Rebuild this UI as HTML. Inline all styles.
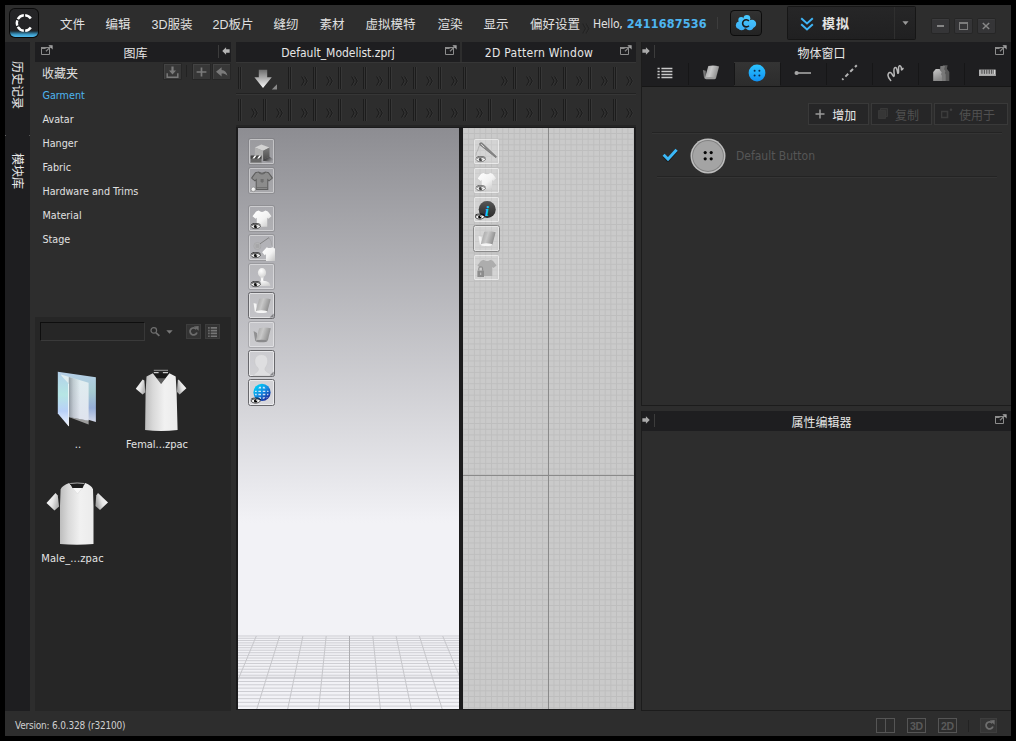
<!DOCTYPE html>
<html lang="zh">
<head>
<meta charset="utf-8">
<title>CLO</title>
<style>
*{box-sizing:border-box;margin:0;padding:0}
html,body{width:1016px;height:741px;overflow:hidden;background:#000}
body{font-family:"DejaVu Sans Condensed","Liberation Sans","Noto Sans CJK SC",sans-serif;color:#dcdcdc;position:relative}
.abs,.abs>*{position:absolute}
#win{position:absolute;left:5px;top:5px;width:1006px;height:731px;background:#2d2d2d;overflow:hidden}
#win *{position:absolute}
.tbar{background:#1e1e20;height:20px}
.tt{font-size:12px;line-height:21.600px;white-space:nowrap;color:#e6e6e6;top:0}
.cj{font-family:"Liberation Sans","Noto Sans CJK SC",sans-serif;transform:translateY(1px)}
.menu{top:10.500px;font-size:12.500px;line-height:16px;white-space:nowrap;color:#e0e0e0;font-family:"Liberation Sans","Noto Sans CJK SC",sans-serif;transform:translateY(1px)}
.li{left:37.500px;font-size:10.700px;line-height:14px;margin-top:1px;color:#e0e0e0;white-space:nowrap}
.sbtn{background:#373737;border:0 solid #282828;width:17px;height:15.600px;box-shadow:0 0 0 0.800px #262626,inset 1px 1px 0 #434343}
.wbtn{top:13.700px;width:17px;height:14.600px;background:#353537;border-radius:1px;box-shadow:0 0 0 0.800px #252525,inset 0 1px 0 #3c3c3e}
.vt{width:60px;height:18px;line-height:18px;font-size:12px;text-align:center;white-space:nowrap;transform:rotate(90deg);color:#e8e8e8}
.cap{font-size:11px;line-height:14px;text-align:center;white-space:nowrap;color:#e4e4e4}
.hd{width:4px;height:22px;background:linear-gradient(90deg,#1c1c1c 0 1px,#323232 1px 2px,#1c1c1c 2px 3px,#363636 3px 4px)}
.cv{width:8.200px;height:10px;margin:0.500px 0 0 1.100px}
.ib{width:27px;height:27px;border:1px solid rgba(50,50,56,0.22);border-radius:2.500px;background:rgba(255,255,255,0.10);box-shadow:inset 0 0 0 1px rgba(255,255,255,0.40)}
.ib svg{left:-0.500px;top:-0.500px;width:26px;height:26px}
.ib.dk{border-color:#68686c;box-shadow:inset 0 0 0 1px rgba(255,255,255,0.5)}
.ib.lt{border-color:rgba(0,0,0,0.07);background:rgba(255,255,255,0.2);box-shadow:inset 0 0 0 1px rgba(255,255,255,0.5)}
.ib.ldk{border-color:#8a8a8a;background:rgba(255,255,255,0.2);box-shadow:inset 0 0 0 1px rgba(255,255,255,0.45)}
.obtn{top:98px;height:22px;background:#262627;border:1px solid #393939}
.obtn span{font-size:12px;line-height:18px;margin-top:0.500px;white-space:nowrap}
.stb{top:713px;width:19px;height:15px;border:1.500px solid #555;font-family:"Liberation Sans",sans-serif;font-weight:bold;font-size:10.500px;line-height:14px;text-align:center;color:#5a5a5a;letter-spacing:-0.200px}
.panel{background:#262626}
</style>
</head>
<body>
<div id="win">
<svg width="0" height="0" style="position:absolute">
<defs>
<symbol id="pop" viewBox="0 0 12 10">
<path d="M0.5 2.5h8v7h-8z" fill="none" stroke="#8c8c8c" stroke-width="1"/>
<path d="M0 2h6.2v2H0z" fill="#8c8c8c"/>
<path d="M5 6.2L10.2 1" stroke="#8c8c8c" stroke-width="1.3" fill="none"/>
<path d="M7.4 0.3h4.2v4.2z" fill="#a8a8a8"/>
<path d="M4.6 3.2L8 3.2 8 4.9 6 6.8 4.6 5.5z" fill="#1e1e20"/>
<path d="M5.2 6.2L10.2 1.2" stroke="#8c8c8c" stroke-width="1.2" fill="none"/>
</symbol>
<symbol id="chev" viewBox="0 0 9 11">
<path d="M1.5 0.5L4.3 5.5 1.5 10.5M4.9 0.5L7.7 5.5 4.9 10.5" fill="none" stroke="#3a3a3a" stroke-width="1"/>
<path d="M0.7 0.5L3.5 5.5 0.7 10.5M4.1 0.5L6.9 5.5 4.1 10.5" fill="none" stroke="#1a1a1a" stroke-width="1.1"/>
</symbol>

<symbol id="eye" viewBox="0 0 11 7">
<path d="M0.400 3.800C2.400 0.800 8.400 0.600 10.600 3.600 8.400 6.800 2.600 6.800 0.400 3.800z" fill="#f6f6f6" stroke="currentColor" stroke-width="0.700"/>
<path d="M0.200 2.500C2.600 -0.500 8.600 -0.500 10.900 2.500" fill="none" stroke="currentColor" stroke-width="0.800"/>
<circle cx="5.400" cy="3.700" r="1.800" fill="currentColor"/><circle cx="6.200" cy="3" r="0.600" fill="#f6f6f6"/>
</symbol>
<symbol id="tee" viewBox="0 0 22 19">
<path d="M7.2 0.4Q11 3.4 14.8 0.4L17.6 1.4 21.7 6.8 18.2 9.6 16.9 8.4V18.6H5.1V8.4L3.8 9.6 0.3 6.8 4.4 1.4z"/>
</symbol>
<symbol id="roll" viewBox="0 0 20 16">
<path d="M1 5.2L4.2 6V13.8L2.4 14.6z" fill="#f4f4f4"/>
<path d="M7 0.8Q13 -0.4 19 1.2L15.6 14.2Q9 16.2 3.2 14.4z" fill="url(#groll)"/>
<ellipse cx="9.3" cy="14.3" rx="6.2" ry="1.5" fill="#f6f6f6"/>
</symbol>
<linearGradient id="groll" x1="0" y1="0" x2="1" y2="0.3"><stop offset="0" stop-color="#9a9a9a"/><stop offset="0.5" stop-color="#c8c8c8"/><stop offset="1" stop-color="#8c8c8c"/></linearGradient>
<linearGradient id="gtee" x1="0" y1="0" x2="1" y2="1"><stop offset="0" stop-color="#ffffff"/><stop offset="0.55" stop-color="#f2f2f2"/><stop offset="1" stop-color="#c4c4c4"/></linearGradient>
<linearGradient id="gglobe" x1="0.15" y1="0.1" x2="0.85" y2="0.95"><stop offset="0" stop-color="#00d0f8"/><stop offset="0.5" stop-color="#1488e0"/><stop offset="1" stop-color="#1a1a90"/></linearGradient>
<linearGradient id="gshadow" x1="0" y1="0" x2="1" y2="0.500"><stop offset="0" stop-color="#161616"/><stop offset="0.500" stop-color="#333" stop-opacity="0.700"/><stop offset="1" stop-color="#444" stop-opacity="0"/></linearGradient>
<linearGradient id="gcr" x1="0" y1="0" x2="0" y2="1"><stop offset="0" stop-color="#7a7a7a"/><stop offset="1" stop-color="#4e4e4e"/></linearGradient>
<linearGradient id="ghl" x1="0" y1="0" x2="0" y2="1"><stop offset="0" stop-color="#fff" stop-opacity="0.18"/><stop offset="1" stop-color="#000" stop-opacity="0.15"/></linearGradient>
<radialGradient id="ghead" cx="0.4" cy="0.3" r="0.8"><stop offset="0" stop-color="#ffffff"/><stop offset="1" stop-color="#d0d0d0"/></radialGradient>

<linearGradient id="gbody" x1="0" y1="0" x2="1" y2="0"><stop offset="0" stop-color="#bdbdbd"/><stop offset="0.25" stop-color="#d9d9d9"/><stop offset="0.6" stop-color="#f1f1f1"/><stop offset="1" stop-color="#ebebeb"/></linearGradient>
<linearGradient id="gslv" x1="0" y1="0" x2="1" y2="0.4"><stop offset="0" stop-color="#ffffff"/><stop offset="0.6" stop-color="#e6e6e6"/><stop offset="1" stop-color="#b4b4b4"/></linearGradient>
<linearGradient id="gslvr" x1="1" y1="0" x2="0" y2="0.4"><stop offset="0" stop-color="#ffffff"/><stop offset="0.6" stop-color="#e6e6e6"/><stop offset="1" stop-color="#a8a8a8"/></linearGradient>
<linearGradient id="gfold" x1="0" y1="0" x2="0" y2="1"><stop offset="0" stop-color="#b2d0ea"/><stop offset="0.42" stop-color="#b6e6e4"/><stop offset="0.72" stop-color="#b8d0f8"/><stop offset="1" stop-color="#f2f6ff"/></linearGradient>
<linearGradient id="gback" x1="0" y1="0" x2="0" y2="1"><stop offset="0" stop-color="#b6cfe8"/><stop offset="0.4" stop-color="#a6ccd2"/><stop offset="0.72" stop-color="#96aed8"/><stop offset="1" stop-color="#d2d8e8"/></linearGradient>
<linearGradient id="gsheet" x1="0" y1="0" x2="0" y2="1"><stop offset="0" stop-color="#e0eef0"/><stop offset="1" stop-color="#dfe3ee"/></linearGradient>
<linearGradient id="gsh2" x1="0" y1="0" x2="1" y2="0"><stop offset="0" stop-color="#5c6670" stop-opacity="0.6"/><stop offset="0.4" stop-color="#5c6670" stop-opacity="0.25"/><stop offset="1" stop-color="#5c6670" stop-opacity="0"/></linearGradient>
<linearGradient id="gstk" x1="0" y1="0" x2="0.300" y2="1"><stop offset="0" stop-color="#cacaca"/><stop offset="1" stop-color="#8a8a8a"/></linearGradient>
<linearGradient id="gcloud" gradientUnits="userSpaceOnUse" x1="0" y1="0" x2="0" y2="17"><stop offset="0" stop-color="#48ccff"/><stop offset="1" stop-color="#3cacf4"/></linearGradient>
<linearGradient id="gbtn" x1="0" y1="0" x2="0" y2="1"><stop offset="0" stop-color="#2cc4ff"/><stop offset="1" stop-color="#1090f2"/></linearGradient>
<linearGradient id="garr" x1="0" y1="0" x2="0" y2="1"><stop offset="0" stop-color="#6e6e6e"/><stop offset="1" stop-color="#fafafa"/></linearGradient>
</defs>
</svg>

<!-- TITLE BAR -->
<div id="logo" style="left:4px;top:3px;width:30px;height:30px;border-radius:6px;background:#0a0a0a">
<div style="left:1px;top:1px;width:28px;height:28px;border-radius:5px;background:linear-gradient(#252527 0,#232325 76%,#1c2a33 79%,#3a93bd 90%,#4bb4e6 97%)"></div>
<svg width="30" height="30" viewBox="0 0 30 30" style="left:0;top:0">
<g fill="none" stroke="#fff" stroke-width="2.5">
<path id="sg" d="M16.18 7.33A7.7 7.7 0 0 1 21.8 10.58"/>
<path d="M8.83 11.15A7.7 7.7 0 0 1 14.83 7.33"/>
<path d="M8.27 17.63A7.7 7.7 0 0 1 8.27 12.37"/>
<path d="M14.83 22.67A7.7 7.7 0 0 1 8.83 18.85"/>
<path d="M21.8 19.42A7.7 7.7 0 0 1 16.18 22.67"/>
</g></svg>
</div>
<div class="menu" style="left:55px">文件</div>
<div class="menu" style="left:100.5px">编辑</div>
<div class="menu" style="left:146.5px">3D服装</div>
<div class="menu" style="left:207.5px">2D板片</div>
<div class="menu" style="left:268.5px">缝纫</div>
<div class="menu" style="left:314.5px">素材</div>
<div class="menu" style="left:360.5px">虚拟模特</div>
<div class="menu" style="left:432.5px">渲染</div>
<div class="menu" style="left:478.5px">显示</div>
<div class="menu" style="left:525px">偏好设置</div>
<div class="menu" style="left:588px;transform:none;font-family:'DejaVu Sans Condensed','Liberation Sans',sans-serif;font-size:12px;letter-spacing:-0.2px">Hello, <b style="position:static;color:#4db5f0;font-size:12.5px;letter-spacing:0.17px;margin-left:1px">2411687536</b></div>


<!-- title right -->
<svg width="9" height="11" style="left:577px;top:18px;opacity:.5"><use href="#chev"/></svg>
<div style="left:712px;top:12px;width:1px;height:12px;background:#3d3d3d"></div>
<div id="cloud" style="left:725.400px;top:5px;width:31.400px;height:25.600px;border-radius:4.500px;background:#0c0c0c">
<div style="left:1px;top:1px;right:1px;bottom:1px;border-radius:3.500px;background:linear-gradient(#323232,#232323)"></div>
<svg width="22" height="17" viewBox="0 0 22 17" style="left:5px;top:4px">
<g fill="url(#gcloud)"><circle cx="11.900" cy="4.300" r="3.400"/><circle cx="6.200" cy="5.900" r="2.900"/><circle cx="4.700" cy="11.200" r="3.800"/><circle cx="17" cy="9.900" r="4.200"/><circle cx="6.600" cy="12.900" r="3.300"/><circle cx="14.600" cy="12.500" r="3.800"/><circle cx="11" cy="9.200" r="5.200"/></g>
<path d="M13.900 6.900A3.600 3.600 0 1 0 13.900 11.700" fill="none" stroke="#1a1a1c" stroke-width="1.600"/>
</svg>
</div>
<div id="sim" style="left:782px;top:1px;width:129px;height:34px;background:#161616;border-radius:2px">
<div style="left:1px;top:1px;right:1px;bottom:1px;background:linear-gradient(#262627,#202021)"></div>
<div style="left:107px;top:1px;width:1px;bottom:1px;background:#2f2f2f"></div>
<svg width="14" height="14" viewBox="0 0 14 14" style="left:13px;top:10.800px"><path d="M1.200 1.200L7 6.400 12.800 1.200M1.200 7.200L7 12.400 12.800 7.200" fill="none" stroke="#3fb4f5" stroke-width="2"/></svg>
<div class="cj" style="left:35px;top:8px;font-size:13px;line-height:18px;font-weight:bold;letter-spacing:1px;color:#e4e4e4;white-space:nowrap">模拟</div>
<svg width="7" height="4.500" viewBox="0 0 8 5" style="left:115px;top:15.200px"><path d="M0.500 0.300h7L4 4.600z" fill="#9a9a9a"/></svg>
</div>
<div class="wbtn" style="left:927px"><div style="left:5px;top:6.400px;width:7px;height:2px;background:#858585"></div></div>
<div class="wbtn" style="left:950px"><div style="left:4px;top:3.400px;width:9px;height:8px;border:1px solid #7c7c7c;border-top-width:2px"></div></div>
<div class="wbtn" style="left:973px"><svg width="8" height="8" viewBox="0 0 8 8" style="left:4.400px;top:3.700px"><path d="M0.800 1L7.200 7M7.200 1L0.800 7" stroke="#888" stroke-width="1.500"/></svg></div>

<!-- SIDEBAR -->
<div id="side" style="left:0;top:37px;width:25px;height:669px;background:#1e1e20">
<div class="cj vt" style="left:-18.300px;top:33.5px">历史记录</div>
<div class="cj vt" style="left:-18.300px;top:119.5px">模块库</div>
<div style="left:0;top:93px;width:1px;height:1px;background:#666"></div>
<div style="left:24px;top:93px;width:1px;height:1px;background:#555"></div>
</div>

<!-- LIBRARY -->
<div class="tbar" style="left:30px;top:37px;width:196px"></div>
<div class="tt cj" style="left:30px;top:37.500px;width:196px;text-align:center;font-size:12px;padding-left:5px">图库</div>
<div class="li cj" style="top:58.500px;left:37px;font-size:12px;line-height:16px">收藏夹</div>
<div class="li" style="top:83px;color:#4db5f0">Garment</div>
<div class="li" style="top:107px">Avatar</div>
<div class="li" style="top:131px">Hanger</div>
<div class="li" style="top:155px">Fabric</div>
<div class="li" style="top:179px">Hardware and Trims</div>
<div class="li" style="top:203px">Material</div>
<div class="li" style="top:227px">Stage</div>

<svg width="12" height="10" style="left:36px;top:40px"><use href="#pop"/></svg>
<div style="left:213px;top:40px;width:1px;height:13px;background:#3c3c3c"></div>
<svg width="8" height="8" viewBox="0 0 9 9" style="left:216.800px;top:42px"><path d="M0.3 4.5L4.6 0.4V2.6H8.6V6.4H4.6V8.6z" fill="#b4b4b4"/></svg>
<div class="sbtn" style="left:158.500px;top:58.600px">
<svg width="15" height="13" viewBox="0 0 15 13" style="left:1px;top:1.300px"><path d="M6.4 1.5h2.2v4h2.4L7.5 9.6 4 5.5h2.4z" fill="#7a7a7a"/><path d="M2.2 8.2v4h10.6v-4" fill="none" stroke="#7a7a7a" stroke-width="1.5"/></svg></div>
<div style="left:180.5px;top:60px;width:1px;height:12px;background:#222"></div>
<div class="sbtn" style="left:187.700px;top:58.600px"><svg width="15" height="13" viewBox="0 0 15 13" style="left:1px;top:1.300px"><path d="M2.6 7h9.8M7.5 2.4v9.2" stroke="#7a7a7a" stroke-width="1.7"/></svg></div>
<div class="sbtn" style="left:207.600px;top:58.600px"><svg width="15" height="13" viewBox="0 0 15 13" style="left:1px;top:1.300px"><path d="M2 6.8L7.6 2.2V5C11 5.2 12.8 7.4 13.4 10.8 11.8 9.2 10.2 8.6 7.6 8.6V11.4z" fill="#7a7a7a"/></svg></div>
<div class="panel" style="left:30px;top:312px;width:196px;height:394px"></div>


<div style="left:35px;top:317px;width:105px;height:19px;background:#262626;border:1px solid #0e0e0e;border-right-color:#383838;border-bottom-color:#3a3a3a"></div>
<svg width="11" height="11" viewBox="0 0 11 11" style="left:145px;top:321px"><circle cx="3.800" cy="4.400" r="2.800" fill="none" stroke="#707070" stroke-width="1.200"/><path d="M5.800 6.600L9.400 9.800" stroke="#707070" stroke-width="1.700"/></svg>
<svg width="7" height="4" viewBox="0 0 7 4" style="left:160.500px;top:325.200px"><path d="M0.3 0.2h6.4L3.5 3.8z" fill="#777"/></svg>
<div class="sbtn" style="left:181px;top:319px;width:15px;height:15px;border:1px solid #3d3d3d;background:#333;box-shadow:none"><svg width="13" height="13" viewBox="0 0 13 13" style="left:0;top:0"><path d="M9.300 4.200A3.500 3.500 0 1 0 9.900 7.400" fill="none" stroke="#6c6c6c" stroke-width="1.800"/><path d="M6.800 1.600L11.600 1V5.800z" fill="#6c6c6c"/></svg></div>
<div class="sbtn" style="left:200px;top:319px;width:15px;height:15px;border:1px solid #3d3d3d;background:#333;box-shadow:none"><svg width="13" height="13" viewBox="0 0 13 13" style="left:0;top:0"><path d="M2.200 2.900h1.400M4.700 2.900h6.300M2.200 5.600h1.400M4.700 5.600h6.300M2.200 8.400h1.400M4.700 8.400h6.300M2.200 11.200h1.400M4.700 11.200h6.300" stroke="#767676" stroke-width="1.600"/></svg></div>

<svg width="40" height="56" viewBox="0 0 40 56" style="left:52px;top:366px">
<path d="M0.8 0.8L38.9 6.3V50.9L11.8 43z" fill="url(#gback)"/>
<path d="M11.8 46L31.6 49.6V53.6z" fill="#9c9c9c"/>
<path d="M4 3.600L31.600 11.800V49.800L11.800 46z" fill="url(#gsheet)"/>
<path d="M11.800 6L23 9.300V48.200L11.800 46z" fill="url(#gsh2)"/>
<path d="M0.8 0.8L11.8 12.7V55.4L0.8 42.6z" fill="url(#gfold)"/>
<path d="M11.5 12.7V55" stroke="#fff" stroke-width="0.9" opacity="0.75"/>
</svg>
<svg width="54" height="64" viewBox="0 0 54 64" style="left:129px;top:363px">
<path d="M18.8 5.2H35.4L31 10.6H23z" fill="#1a1a1a"/><path d="M22.6 10.2H31.4L27.1 15.9z" fill="#5c5c5c"/>
<path d="M18.8 5.2L12.5 8.6 11.6 24 11.1 62Q27 63.8 43.6 62L42.6 24 41.7 8.6 35.4 5.2 27.1 15.9z" fill="url(#gbody)"/>
<path d="M8.6 11.5L1.8 20.8 8.6 26.6 11.3 24.2 10.4 12.5z" fill="url(#gslv)"/>
<path d="M44.6 11.5L52.4 20.3 45.6 26.6 42.9 23.7 43.8 12.5z" fill="url(#gslvr)"/>
<path d="M19.8 2.3H34" stroke="#e8e8e8" stroke-width="0.6"/><path d="M19.8 4.7H24.6M28.9 4.7H34" stroke="#f0f0f0" stroke-width="1"/>
</svg>
<svg width="64" height="65" viewBox="0 0 64 65" style="left:40px;top:476px">
<path d="M24.200 2Q17.600 4.200 15.600 8.200L15 25V63Q32 64.600 48.500 63V25L48 8.200Q46.400 4.200 40.300 2L39 4Q32 5 25.500 4z" fill="url(#gbody)"/>
<path d="M25 2.600Q32 1.600 39.600 2.600L37.600 6.900Q32.500 8 27.400 6.900z" fill="#1c1c1c"/>
<path d="M25.200 2.500Q32 1.500 39.400 2.500" fill="none" stroke="#e4e4e4" stroke-width="0.700"/>
<path d="M27.600 7L32.500 13 37.400 7" fill="#f7f7f7" stroke="#d6d6d6" stroke-width="0.500"/>
<path d="M10.500 12L1.500 22 9.500 29.500 14 25.400 12.800 14.600z" fill="url(#gslv)"/>
<path d="M53 12L63 21.500 55 29 50.500 24.900 51.200 14.600z" fill="url(#gslvr)"/>
</svg>
<div class="cap" style="left:48px;top:433px;width:50px">..</div>
<div class="cap" style="left:106px;top:433px;width:92px">Femal...zpac</div>
<div class="cap" style="left:21.500px;top:547px;width:92px;letter-spacing:0.150px">Male_...zpac</div>

<!-- 3D WINDOW -->
<div class="tbar" style="left:231px;top:37px;width:224px"></div>
<div class="tt" style="left:231px;top:37.900px;width:224px;text-align:center;padding-right:20px">Default_Modelist.zprj</div>
<div style="left:231px;top:120px;width:399.600px;height:585.300px;background:#1b1b1c;border-top:2px solid #252525"></div>
<div id="v3d" style="left:233px;top:123px;width:221px;height:581px;background:linear-gradient(#8d8d92,#f2f2f6 68%);overflow:hidden">
<svg width="221" height="581" viewBox="0 0 221 581" style="left:0;top:0.500px"><path d="M0 581.00H221M0 577.11H221M0 573.33H221M0 569.64H221M0 566.04H221M0 562.53H221M0 559.11H221M0 555.77H221M0 552.51H221M0 549.33H221M0 546.22H221M0 543.18H221M0 540.21H221M0 537.31H221M0 534.48H221M0 531.70H221M0 528.99H221M0 526.34H221M0 523.74H221M0 521.20H221M0 518.71H221M0 516.27H221M0 513.88H221M0 511.54H221M0 509.25H221M0 507.00H221" stroke="#cdcdd2" stroke-width="1" fill="none"/><path d="M0 548.3H221" stroke="#c2c2c6" stroke-width="0.8"/><path d="M-28.30 507.00L-74.48 581.00M-5.00 507.00L-43.49 581.00M18.30 507.00L-12.49 581.00M41.60 507.00L18.51 581.00M64.90 507.00L49.51 581.00M88.20 507.00L80.50 581.00M134.80 507.00L142.50 581.00M158.10 507.00L173.49 581.00M181.40 507.00L204.49 581.00M204.70 507.00L235.49 581.00M228.00 507.00L266.49 581.00M251.30 507.00L297.48 581.00" stroke="#c6c6ca" stroke-width="1" fill="none"/><path d="M111.5 507.0V581" stroke="#adadb1" stroke-width="1"/></svg>
<div class="ib" style="left:10px;top:10px"><svg viewBox="0 0 26 26">
<path d="M12.300 5.600L20.500 8.600 14.100 11.700 5.900 8.600z" fill="#d2d2d2"/><path d="M5.900 8.600L14.100 11.700V20.700L5.900 17.300z" fill="#b0b0b0"/><path d="M14.100 11.700L20.500 8.600V17.700L14.100 20.700z" fill="url(#gcr)"/>
<path d="M14.1 20.7L20.5 17.7 24.9 20.7 24 23.3 14.1 21.8z" fill="url(#gshadow)"/>
<path d="M1.700 16.600h10.800v7.600H1.700z" fill="#686868"/><path d="M1.700 16.600h10.800v3.100H1.700z" fill="#444"/><path d="M3.400 19.600l2.300-3h1.900l-2.300 3zM8.100 19.600l2.300-3h1.900l-2.300 3z" fill="#fff"/><path d="M1.700 24.100h10.800" stroke="#d4d4d4" stroke-width="0.700"/>
</svg></div>
<div class="ib" style="left:10px;top:39px"><svg viewBox="0 0 26 26">
<use href="#tee" x="2.2" y="3.4" width="21.6" height="18.6" fill="#8c8c8c" stroke="#5e5e5e" stroke-width="1.100"/>
<path d="M9.2 4.2Q13 8 16.8 4.2" fill="none" stroke="#666" stroke-width="1"/><path d="M11.6 11h3v2.4l-1.5 1.6-1.5-1.6z" fill="#6e6e6e"/><path d="M7.6 19.6h11" stroke="#666" stroke-width="0.8"/>
<circle cx="4.4" cy="21.4" r="2.3" fill="url(#ghead)" stroke="#777" stroke-width="0.5"/>
</svg></div>
<div class="ib" style="left:10px;top:77px"><svg viewBox="0 0 26 26">
<use href="#tee" x="3.2" y="4" width="19.6" height="17.4" fill="url(#gtee)"/><use href="#eye" x="1.4" y="17" width="10.6" height="6.6" color="#111"/>
</svg></div>
<div class="ib" style="left:10px;top:106px"><svg viewBox="0 0 26 26">
<circle cx="8.4" cy="11" r="3.6" fill="#b4b4b6" stroke="#a2a2a4" stroke-width="0.6"/><rect x="6.5" y="9.1" width="3.8" height="3.8" fill="#a6a6a8"/>
<path d="M11 8.8L20 2.6" stroke="#777" stroke-width="0.8"/><path d="M20 2.6Q22.6 6 22.8 10.6" fill="none" stroke="#999" stroke-width="0.5"/>
<path d="M13.2 17.2L17.8 12.2Q20.6 14 23.4 12.2L26 13.4V26H17V19.2L15.6 20.2z" fill="url(#gtee)"/>
<use href="#eye" x="1.4" y="17" width="10.6" height="6.6" color="#111"/>
</svg></div>
<div class="ib" style="left:10px;top:135px"><svg viewBox="0 0 26 26">
<path d="M8.200 22C8.200 19 9.400 18.200 11.600 17.400 12.200 15.800 12 14.600 11.400 13.200H14.800C14.200 14.600 14 15.800 14.600 17 19 17.200 20.800 18.200 21.400 22z" fill="url(#ghead)"/>
<ellipse cx="13" cy="8.700" rx="4.100" ry="4.600" fill="url(#ghead)"/><use href="#eye" x="1.4" y="17" width="10.6" height="6.6" color="#111"/>
</svg></div>
<div class="ib dk" style="left:10px;top:164px"><svg viewBox="0 0 26 26"><use href="#roll" x="3.6" y="5" width="19" height="15.4"/><path d="M24.6 24.6h-4l4-4z" fill="#808084"/></svg></div>
<div class="ib" style="left:10px;top:193px"><svg viewBox="0 0 26 26">
<path d="M4.6 9L8 11V19.4L6.2 19z" fill="#909092"/><path d="M10.2 6.2Q16 4.6 21.8 6.2L18.8 18.6Q12.6 20.8 6.6 19z" fill="url(#groll)"/><ellipse cx="12.6" cy="19" rx="5.8" ry="1.3" fill="#8a8a8c"/>
</svg></div>
<div class="ib dk" style="left:10px;top:222px"><svg viewBox="0 0 26 26">
<path d="M4.2 24.6C5 22.4 8.6 21.4 9.4 19 9.6 17.8 9 16.8 7.6 15.4 4.2 11.8 5.4 3.6 12.4 3.6 19.4 3.6 19.8 10.8 17.4 14.8 16.4 16.6 15.6 17.6 16 19 16.8 21.6 21.6 21.6 22.6 24.6z" fill="#dedee0" stroke="#c6c6c8" stroke-width="0.5"/>
<path d="M24.6 24.6h-4l4-4z" fill="#8a8a8e"/></svg></div>
<div class="ib dk" style="left:10px;top:251px"><svg viewBox="0 0 26 26">
<circle cx="13" cy="12.4" r="8.6" fill="url(#gglobe)"/>
<g fill="#eef6fd" opacity="0.85"><path d="M10.300 6.800h1.700v1.600H9.300zM13.800 6.800h1.600l1 1.600h-2.600zM6.300 10.700h1.400v1.400H5.900zM9.500 10.700h2.500v1.400H9.300zM13.800 10.700h2.400l0.200 1.400h-2.600zM18 10.700h1.300l0.300 1.400H18.200zM5.900 13.800h1.800v1.400H6.300zM9.300 13.800h2.700v1.400H9.500zM13.800 13.800h2.600l-0.200 1.400h-2.400zM18.200 13.800h1.400l-0.400 1.400H18zM9.300 17.200h2.700v1.700L10.300 18.600zM13.800 17.200h2.600l-1 1.400-1.600 0.300zM17.600 17.200h1.200l-1.200 1.200z"/></g>
<use href="#eye" x="1.4" y="17.4" width="10.6" height="6.6" color="#000"/>
</svg></div>
</div>


<!-- toolbars -->
<div style="left:231px;top:57px;width:400px;height:1px;background:#363636"></div>
<div style="left:231px;top:88px;width:400px;height:1px;background:#222"></div><div style="left:231px;top:89px;width:400px;height:1px;background:#363636"></div>
<i class="hd" style="left:233px;top:62px"></i><i class="hd" style="left:283px;top:62px"></i><i class="hd" style="left:308px;top:62px"></i><i class="hd" style="left:333px;top:62px"></i><i class="hd" style="left:358px;top:62px"></i><i class="hd" style="left:383px;top:62px"></i><i class="hd" style="left:408px;top:62px"></i><i class="hd" style="left:433px;top:62px"></i><svg class="cv" style="left:294.7px;top:70.5px"><use href="#chev"/></svg><svg class="cv" style="left:319.7px;top:70.5px"><use href="#chev"/></svg><svg class="cv" style="left:344.7px;top:70.5px"><use href="#chev"/></svg><svg class="cv" style="left:369.7px;top:70.5px"><use href="#chev"/></svg><svg class="cv" style="left:394.7px;top:70.5px"><use href="#chev"/></svg><svg class="cv" style="left:419.7px;top:70.5px"><use href="#chev"/></svg><svg class="cv" style="left:444.7px;top:70.5px"><use href="#chev"/></svg><i class="hd" style="left:233px;top:94px"></i><svg class="cv" style="left:244.7px;top:102.5px"><use href="#chev"/></svg><i class="hd" style="left:258px;top:94px"></i><svg class="cv" style="left:269.7px;top:102.5px"><use href="#chev"/></svg><i class="hd" style="left:283px;top:94px"></i><svg class="cv" style="left:294.7px;top:102.5px"><use href="#chev"/></svg><i class="hd" style="left:308px;top:94px"></i><svg class="cv" style="left:319.7px;top:102.5px"><use href="#chev"/></svg><i class="hd" style="left:333px;top:94px"></i><svg class="cv" style="left:344.7px;top:102.5px"><use href="#chev"/></svg><i class="hd" style="left:358px;top:94px"></i><svg class="cv" style="left:369.7px;top:102.5px"><use href="#chev"/></svg><i class="hd" style="left:383px;top:94px"></i><svg class="cv" style="left:394.7px;top:102.5px"><use href="#chev"/></svg><i class="hd" style="left:408px;top:94px"></i><svg class="cv" style="left:419.7px;top:102.5px"><use href="#chev"/></svg><i class="hd" style="left:433px;top:94px"></i><svg class="cv" style="left:444.7px;top:102.5px"><use href="#chev"/></svg><i class="hd" style="left:458px;top:62px"></i><i class="hd" style="left:508px;top:62px"></i><i class="hd" style="left:533px;top:62px"></i><i class="hd" style="left:558px;top:62px"></i><i class="hd" style="left:583px;top:62px"></i><i class="hd" style="left:608px;top:62px"></i><svg class="cv" style="left:494.7px;top:70.5px"><use href="#chev"/></svg><svg class="cv" style="left:519.7px;top:70.5px"><use href="#chev"/></svg><svg class="cv" style="left:544.7px;top:70.5px"><use href="#chev"/></svg><svg class="cv" style="left:569.7px;top:70.5px"><use href="#chev"/></svg><svg class="cv" style="left:594.7px;top:70.5px"><use href="#chev"/></svg><svg class="cv" style="left:619.7px;top:70.5px"><use href="#chev"/></svg><i class="hd" style="left:458px;top:94px"></i><svg class="cv" style="left:469.7px;top:102.5px"><use href="#chev"/></svg><i class="hd" style="left:483px;top:94px"></i><svg class="cv" style="left:494.7px;top:102.5px"><use href="#chev"/></svg><i class="hd" style="left:508px;top:94px"></i><svg class="cv" style="left:519.7px;top:102.5px"><use href="#chev"/></svg><i class="hd" style="left:533px;top:94px"></i><svg class="cv" style="left:544.7px;top:102.5px"><use href="#chev"/></svg><i class="hd" style="left:558px;top:94px"></i><svg class="cv" style="left:569.7px;top:102.5px"><use href="#chev"/></svg><i class="hd" style="left:583px;top:94px"></i><svg class="cv" style="left:594.7px;top:102.5px"><use href="#chev"/></svg><i class="hd" style="left:608px;top:94px"></i><svg class="cv" style="left:619.7px;top:102.5px"><use href="#chev"/></svg>
<svg width="24" height="21" viewBox="0 0 24 21" style="left:249px;top:64px"><path d="M4.8 0.8h8.4v7.4h4.6L9 19 0.4 8.2h4.4z" fill="url(#garr)"/><path d="M17.8 20.5h5.2v-5.2z" fill="#8a8a8a"/></svg>

<!-- 2D WINDOW -->
<div class="tbar" style="left:457px;top:37px;width:174px"></div>
<div class="tt" style="left:457px;top:37.900px;width:174px;text-align:center;letter-spacing:0.3px;padding-right:20px">2D Pattern Window</div>
<div id="v2d" style="left:458px;top:123px;width:171px;height:581px;background-color:#cacaca;background-image:linear-gradient(90deg,#bebebe 1px,transparent 1px),linear-gradient(#bebebe 1px,transparent 1px);background-size:5.700px 5.700px;background-position:5.200px 5px;overflow:hidden">
<div style="left:85px;top:0;width:1px;height:581px;background:#8a8a8a"></div>
<div style="left:0;top:347px;width:171px;height:1px;background:#8a8a8a"></div>
<div class="ib lt" style="left:10px;top:10px"><svg viewBox="0 0 26 26">
<path d="M5.800 5.800C5 4 7 3 8.600 4.400L22.600 17.800 21.800 18.600z" fill="#868686" stroke="#6a6a6a" stroke-width="0.700"/><path d="M7.2 5.2L10.4 8.4" stroke="#e8e8e8" stroke-width="0.8"/>
<path d="M6.4 5.6C3.8 8 4.6 11 3 12.6 1.6 14 2.6 15.4 1.8 16.6" fill="none" stroke="#8a8a8a" stroke-width="0.5"/>
<use href="#eye" x="1.4" y="17" width="10.6" height="6.6" color="#4a4a4a"/></svg></div>
<div class="ib lt" style="left:10px;top:39px"><svg viewBox="0 0 26 26"><use href="#tee" x="3.4" y="4.6" width="19" height="16.4" fill="url(#gtee)"/><use href="#eye" x="1.4" y="17" width="10.6" height="6.6" color="#4a4a4a"/></svg></div>
<div class="ib lt" style="left:10px;top:68px"><svg viewBox="0 0 26 26"><circle cx="13.2" cy="12.6" r="8.5" fill="#333"/><circle cx="13.2" cy="12.6" r="8.5" fill="url(#ghl)"/>
<text x="11" y="18.6" font-family="Liberation Serif,serif" font-style="italic" font-weight="bold" font-size="15" fill="#0cc8ff">i</text>
<use href="#eye" x="0.6" y="16.4" width="10.6" height="6.6" color="#000"/></svg></div>
<div class="ib ldk" style="left:10px;top:97px"><svg viewBox="0 0 26 26"><use href="#roll" x="3.6" y="5" width="19" height="15.4"/></svg></div>
<div class="ib lt" style="left:10px;top:126px"><svg viewBox="0 0 26 26"><use href="#tee" x="3" y="4.4" width="20" height="17" fill="#adadad"/>
<rect x="3.4" y="15.6" width="6.6" height="6.4" fill="#8c8c8c"/><path d="M4.8 15.6V13.6A1.9 1.9 0 0 1 8.6 13.600V15.6" fill="none" stroke="#8c8c8c" stroke-width="1.1"/><rect x="6.2" y="17.6" width="1" height="2.4" fill="#c8c8c8"/></svg></div>
</div>

<!-- OBJECT BROWSER -->
<div class="tbar" style="left:637px;top:37px;width:369px;height:45px"></div>
<div class="tt cj" style="left:637px;top:37.700px;width:369px;text-align:center;font-size:12px;padding-right:10px">物体窗口</div>


<!-- tabs -->
<div style="left:729px;top:57px;width:46px;height:24px;background:linear-gradient(#343434,#2c2c2c)"></div>
<div style="left:637px;top:81px;width:369px;height:1px;background:#161616"></div>
<div style="left:683px;top:58px;width:1px;height:22px;background:#161617"></div><div style="left:729px;top:58px;width:1px;height:22px;background:#161617"></div><div style="left:775px;top:58px;width:1px;height:22px;background:#161617"></div><div style="left:821px;top:58px;width:1px;height:22px;background:#161617"></div><div style="left:867px;top:58px;width:1px;height:22px;background:#161617"></div><div style="left:913px;top:58px;width:1px;height:22px;background:#161617"></div><div style="left:959px;top:58px;width:1px;height:22px;background:#161617"></div>
<svg width="16" height="12" viewBox="0 0 16 12" style="left:652px;top:62px"><path d="M0.500 1.500h2.200M4.400 1.500h11M0.500 4.500h2.200M4.400 4.500h11M0.500 7.500h2.200M4.400 7.500h11M0.500 10.500h2.200M4.400 10.500h11" stroke="#c9c9c9" stroke-width="1.500"/></svg>
<svg width="18" height="15" viewBox="0 0 20 16" style="left:697px;top:60px"><path d="M1 5.200L4.200 6V13.800L2.400 14.600z" fill="#777"/><path d="M7 0.800Q13 -0.400 19 1.200L15.600 14.200Q9 16.200 3.200 14.400z" fill="url(#groll)"/><ellipse cx="9.300" cy="14.300" rx="6.200" ry="1.300" fill="#9a9a9a"/></svg>
<svg width="18" height="18" viewBox="0 0 18 18" style="left:743px;top:59px"><circle cx="9" cy="9" r="8.400" fill="url(#gbtn)"/><g fill="#0a2c50"><circle cx="6.600" cy="6.700" r="1"/><circle cx="11.400" cy="6.700" r="1"/><circle cx="6.600" cy="11.400" r="1"/><circle cx="11.400" cy="11.400" r="1"/></g></svg>
<svg width="18" height="6" viewBox="0 0 18 6" style="left:789px;top:65px"><circle cx="2.600" cy="3" r="2.100" fill="#a6a6a6"/><path d="M3 3H17" stroke="#a6a6a6" stroke-width="1.600"/></svg>
<svg width="17" height="17" viewBox="0 0 17 17" style="left:836px;top:59px"><path d="M1.200 15.800L15.800 1.200" stroke="#b4b4b4" stroke-width="2" stroke-dasharray="4 2.800" stroke-dashoffset="2.300"/></svg>
<svg width="18" height="18" viewBox="0 0 18 18" style="left:881px;top:59px"><path d="M4.700 16.500C2.800 14.500 1.400 11.500 2.400 9.600 3.400 7.800 5.200 8.400 6.200 10.400 7 12 8 13.400 8.200 11.400 8.400 8.800 7 4.600 8.800 3.600 10.400 2.800 11.200 6 11.600 8.400 11.800 10 12.600 9.400 12.600 7.400 12.600 5 12 2.200 13.600 1.800 15 1.500 15.600 4 15.400 5.600 15.400 6.400 16.400 5.400 17 4.300" fill="none" stroke="#b8b8b8" stroke-width="1.500" stroke-linecap="round" stroke-linejoin="round"/></svg>
<svg width="17" height="17" viewBox="0 0 17 17" style="left:928px;top:60px"><path d="M9.800 0.300h4.800l-0.700 3.400 2.400 3.400V15.900H9z" fill="#585858"/><path d="M7.400 0.900h4.600l-0.900 3.300 1.400 1.700-0.700 2.200 0.900 1.400V15.900H6z" fill="#787878"/><path d="M0.200 15.900V7.100L2.800 3.900h3.900l0.500 1.800 1.500 1.500-0.700 2.100 0.900 1.500V15.900z" fill="url(#gstk)"/></svg>
<svg width="17" height="8" viewBox="0 0 17 8" style="left:974px;top:64px"><rect x="0.200" y="0.600" width="16.400" height="6.400" fill="#d6d6d6"/><rect x="0.200" y="5.200" width="16.400" height="1.800" fill="#a8a8a8"/><path d="M2.200 0.600v4.300M3.900 0.600v4.300M5.600 0.600v4.300M7.300 0.600v4.300M9 0.600v4.300M10.700 0.600v4.300M12.400 0.600v4.300M14.100 0.600v4.300" stroke="#2a2a2a" stroke-width="0.800"/></svg>
<!-- buttons -->
<div class="obtn" style="left:802.800px;width:61.700px"><svg width="10" height="10" viewBox="0 0 10 10" style="left:6px;top:4.500px"><path d="M0.500 5h9M5 0.500v9" stroke="#9a9a9a" stroke-width="1.500"/></svg><span class="cj" style="left:23.500px;top:1.700px;color:#e6e6e6">增加</span></div>
<div class="obtn" style="left:865.600px;width:61.900px"><svg width="10" height="11" viewBox="0 0 10 11" style="left:6px;top:4px"><path d="M2.500 0.500h7v8h-7z" fill="#303030" stroke="#383838"/><path d="M0.500 2.500h7v8h-7z" fill="#363636" stroke="#383838"/></svg><span class="cj" style="left:23.500px;top:1.700px;color:#505050">复制</span></div>
<div class="obtn" style="left:929px;width:73.500px"><svg width="12" height="11" viewBox="0 0 12 11" style="left:6px;top:4px"><path d="M0.500 3.500h6v6h-6z" fill="none" stroke="#3c3c3c" stroke-width="1.600"/><circle cx="10" cy="1.800" r="1.300" fill="#3e3e3e"/></svg><span class="cj" style="left:24px;top:1.700px;color:#505050">使用于</span></div>
<div style="left:647px;top:127px;width:350px;height:1px;background:#232323"></div><div style="left:647px;top:128px;width:350px;height:1px;background:#343434"></div>
<svg width="16" height="14" viewBox="0 0 16 14" style="left:657px;top:142.500px"><path d="M1.600 8L6 12.400 14.600 3" fill="none" stroke="#151515" stroke-width="3" opacity="0.7"/><path d="M1.600 6.800L6 11.200 14.600 1.800" fill="none" stroke="#3bb8f8" stroke-width="3"/></svg>
<svg width="36" height="36" viewBox="0 0 36 36" style="left:685.100px;top:132.800px"><circle cx="18" cy="18" r="17.500" fill="#bdbdbd"/><circle cx="18" cy="18" r="15.900" fill="#808080"/><circle cx="18" cy="18" r="15" fill="#a4a4a4"/><g fill="#060606"><circle cx="15.200" cy="14.600" r="1.600"/><circle cx="21.200" cy="14.600" r="1.600"/><circle cx="15.200" cy="20.800" r="1.600"/><circle cx="21.200" cy="20.800" r="1.600"/></g></svg>
<div style="left:731px;top:143px;font-size:12px;line-height:16px;color:#565656;white-space:nowrap">Default Button</div>
<div style="left:652px;top:171px;width:340px;height:1px;background:#232323"></div><div style="left:652px;top:172px;width:340px;height:1px;background:#343434"></div>
<!-- panel borders -->
<div style="left:636px;top:37px;width:1px;height:364px;background:#1c1c1c"></div>
<div style="left:636px;top:400px;width:370px;height:1px;background:#1c1c1c"></div>
<div style="left:636px;top:406px;width:1px;height:300px;background:#1c1c1c"></div>
<div style="left:636px;top:705px;width:370px;height:1px;background:#1c1c1c"></div>
<!-- panel arrows -->
<svg width="8" height="8" viewBox="0 0 9 9" style="left:637.200px;top:42.200px"><path d="M8.700 4.500L4.400 0.400V2.600H0.400V6.400H4.400V8.600z" fill="#a9a9a9"/></svg>
<div style="left:649px;top:40px;width:1px;height:13px;background:#3c3c3c"></div>


<!-- PROPERTY EDITOR -->
<div class="tbar" style="left:637px;top:406px;width:369px"></div>
<div class="tt cj" style="left:637px;top:406.700px;width:369px;text-align:center;font-size:12px;padding-right:10px">属性编辑器</div>


<svg width="12" height="10" style="left:440px;top:40px"><use href="#pop"/></svg>
<svg width="12" height="10" style="left:615px;top:40px"><use href="#pop"/></svg>
<svg width="12" height="10" style="left:990px;top:40px"><use href="#pop"/></svg>
<svg width="12" height="10" style="left:990px;top:409px"><use href="#pop"/></svg>

<svg width="8" height="8" viewBox="0 0 9 9" style="left:637.200px;top:411.200px"><path d="M8.700 4.500L4.400 0.400V2.600H0.400V6.400H4.400V8.600z" fill="#a9a9a9"/></svg>
<div style="left:649px;top:409px;width:1px;height:13px;background:#3c3c3c"></div>
<!-- STATUS -->
<div style="left:871px;top:713px;width:19px;height:15px;border:1.500px solid #555"></div><div style="left:879.800px;top:713px;width:1.400px;height:15px;background:#555"></div>
<div class="stb" style="left:902px">3D</div>
<div class="stb" style="left:933px">2D</div>
<div style="left:963px;top:715px;width:1px;height:12px;background:#222"></div>
<div class="sbtn" style="left:974.500px;top:713px;width:17.500px;height:15px;border:1px solid #3e3e3e;background:#363636;box-shadow:none"><svg width="13" height="13" viewBox="0 0 13 13" style="left:2px;top:0"><path d="M9.300 4.200A3.500 3.500 0 1 0 9.900 7.400" fill="none" stroke="#6e6e6e" stroke-width="1.800"/><path d="M6.800 1.600L11.600 1V5.800z" fill="#6e6e6e"/></svg></div>

<div style="left:10px;top:713.800px;font-size:10px;line-height:14px;color:#d0d0d0;white-space:nowrap;letter-spacing:-0.2px">Version: 6.0.328 (r32100)</div>
</div>
</body>
</html>
